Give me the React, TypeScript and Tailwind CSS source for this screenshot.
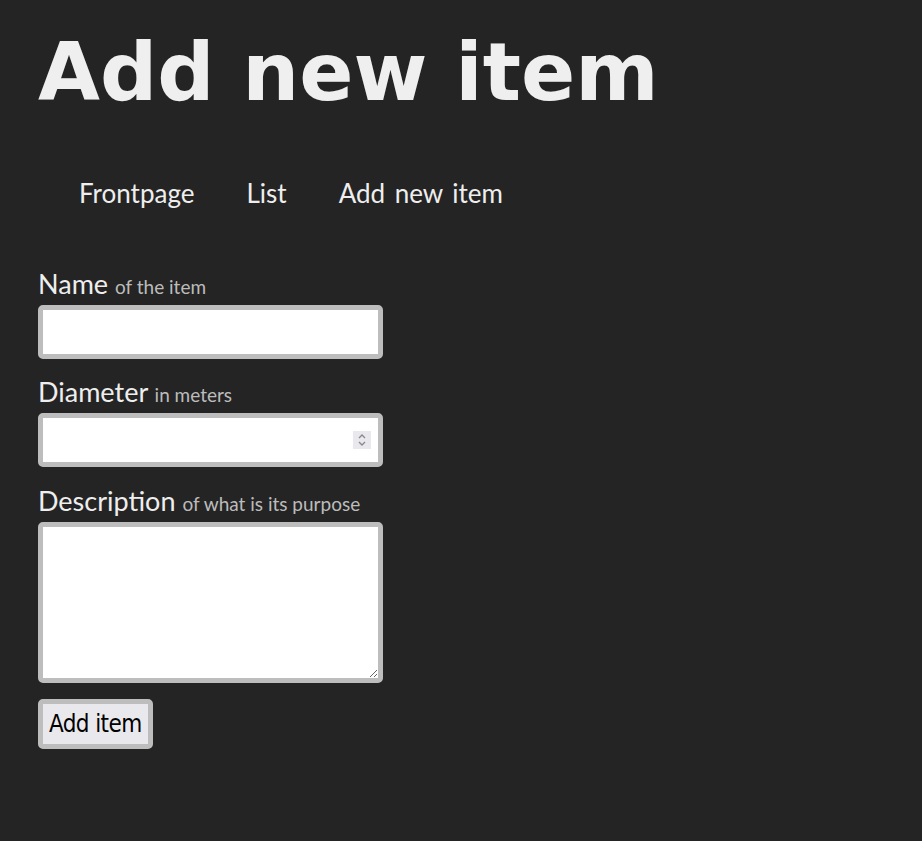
import React from "react";

export default function App() {
  const sans = { fontFamily: '"Lato", "Open Sans", sans-serif' } as React.CSSProperties;
  return (
    <div className="min-h-[841px] w-full bg-[#242424] text-[#eeeeee] pl-[38px]">
      <h1
        className="m-0 pt-[33px] text-[80px] leading-[80px] font-bold text-[#efefef] [font-family:'DejaVu_Sans',Verdana,sans-serif]"
      >
        Add new item
      </h1>
      <nav className="mt-[64px]">
        <ul className="flex h-[32px] gap-[52px] pl-[41px] text-[26px] leading-[32px] [word-spacing:3px] [font-family:Lato,'Open_Sans',sans-serif]">
          <li>Frontpage</li>
          <li>List</li>
          <li>Add new item</li>
        </ul>
      </nav>
      <form className="mt-[59px] flex flex-col items-start" style={sans}>
        <div className="mb-[17px] flex flex-col items-start">
          <label className="h-[32px] text-[27px] leading-[32px] mb-[5px]">
            Name <span className="text-[19px] leading-none text-[#bcbcbc]">of the item</span>
          </label>
          <input
            type="text"
            className="w-[345px] h-[54px] bg-white border-[5px] border-[#bdbdbd] rounded-[5px] outline-none"
          />
        </div>
        <div className="mb-[18px] flex flex-col items-start">
          <label className="h-[32px] text-[27px] leading-[32px] mb-[5px]">
            Diameter <span className="text-[19px] leading-none text-[#bcbcbc]">in meters</span>
          </label>
          <div className="relative">
            <input
              type="text"
              className="w-[345px] h-[54px] bg-white border-[5px] border-[#bdbdbd] rounded-[5px] outline-none"
            />
            <span className="absolute right-[12px] top-[18px] flex h-[18px] w-[18px] flex-col items-center justify-center bg-[#e9e9ed]">
              <svg width="10" height="14" viewBox="0 0 10 14" fill="none" stroke="#8a8a8a" strokeWidth="1.4">
                <path d="M2 5 L5 2 L8 5" />
                <path d="M2 9 L5 12 L8 9" />
              </svg>
            </span>
          </div>
        </div>
        <div className="mb-[16px] flex flex-col items-start">
          <label className="h-[32px] text-[27px] leading-[32px] mb-[5px]">
            Description <span className="text-[19px] leading-none text-[#bcbcbc]">of what is its purpose</span>
          </label>
          <textarea className="block w-[345px] h-[161px] bg-white border-[5px] border-[#bdbdbd] rounded-[5px] outline-none" />
        </div>
        <button
          type="button"
          className="h-[50px] px-[6px] bg-[#e9e9ed] border-[5px] border-[#bdbdbd] rounded-[5px] text-black text-[24px] tracking-[-0.6px] [font-family:'DejaVu_Sans_Condensed','DejaVu_Sans',sans-serif] [font-stretch:condensed]"
        >
          Add item
        </button>
      </form>
    </div>
  );
}
